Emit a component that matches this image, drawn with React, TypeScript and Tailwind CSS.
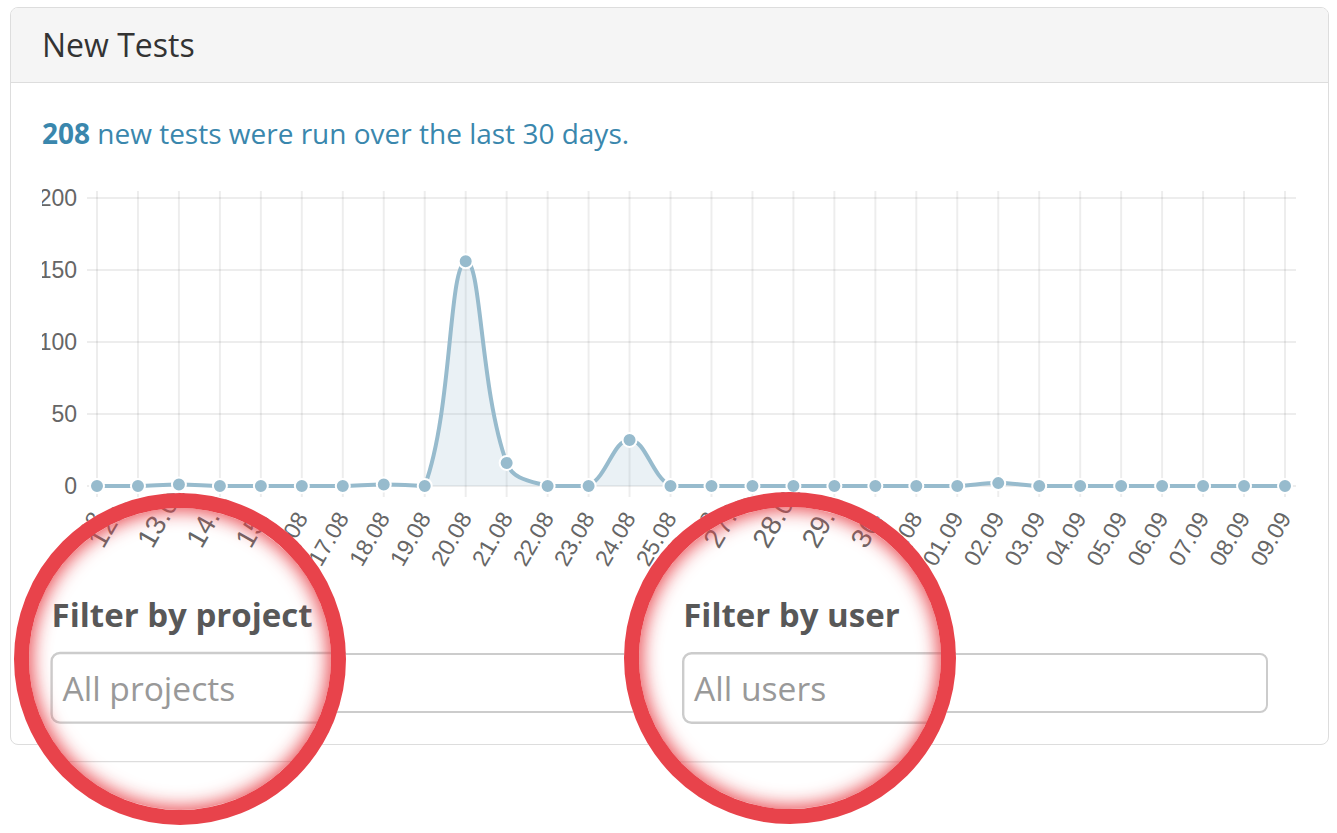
import React from "react";

const DATES = [
  "11.08","12.08","13.08","14.08","15.08","16.08","17.08","18.08","19.08","20.08",
  "21.08","22.08","23.08","24.08","25.08","26.08","27.08","28.08","29.08","30.08",
  "31.08","01.09","02.09","03.09","04.09","05.09","06.09","07.09","08.09","09.09",
];
const VALUES = [0,0,1,0,0,0,0,1,0,156,16,0,0,32,0,0,0,0,0,0,0,0,2,0,0,0,0,0,0,0];

const X0 = 97;
const STEP = 1188 / 29;
const TOP = 198;
const BOTTOM = 486;
const yOf = (v: number) => BOTTOM - v * 1.44;

type P = { x: number; y: number };

function buildPath(pts: P[]) {
  const cps = pts.map((p, i) => {
    const prev = i > 0 ? pts[i - 1] : p;
    const next = i < pts.length - 1 ? pts[i + 1] : p;
    const t = i > 0 && i < pts.length - 1 ? 0.4 : 0;
    const d01 = Math.hypot(p.x - prev.x, p.y - prev.y);
    const d12 = Math.hypot(next.x - p.x, next.y - p.y);
    const sum = d01 + d12;
    const fa = sum === 0 ? 0 : (t * d01) / sum;
    const fb = sum === 0 ? 0 : (t * d12) / sum;
    const inner = { x: p.x - fa * (next.x - prev.x), y: p.y - fa * (next.y - prev.y) };
    const outer = { x: p.x + fb * (next.x - prev.x), y: p.y + fb * (next.y - prev.y) };
    inner.y = Math.min(BOTTOM, Math.max(TOP, inner.y));
    outer.y = Math.min(BOTTOM, Math.max(TOP, outer.y));
    return { inner, outer };
  });
  let d = `M${pts[0].x},${pts[0].y}`;
  for (let i = 1; i < pts.length; i++) {
    const a = cps[i - 1].outer;
    const b = cps[i].inner;
    d += ` C${a.x},${a.y} ${b.x},${b.y} ${pts[i].x},${pts[i].y}`;
  }
  return d;
}

function Chart() {
  const pts: P[] = VALUES.map((v, i) => ({ x: X0 + i * STEP, y: yOf(v) }));
  const line = buildPath(pts);
  const fill = `${line} L${pts[pts.length - 1].x},${BOTTOM} L${pts[0].x},${BOTTOM} Z`;
  const grid = "rgba(0,0,0,0.07)";
  return (
    <svg width={1254} height={450} className="block" viewBox="0 0 1254 450">
      <g transform="translate(-42,-153)" fontFamily="'Liberation Sans', Arial, sans-serif">
        {[0, 50, 100, 150, 200].map((v) => (
          <g key={v}>
            <line x1={87} x2={1297} y1={yOf(v)} y2={yOf(v)} stroke={grid} strokeWidth={2} />
            <text x={77} y={yOf(v)} textAnchor="end" dominantBaseline="central" fontSize={23} fill="#666">
              {v}
            </text>
          </g>
        ))}
        {pts.map((p, i) => (
          <line key={i} x1={p.x} x2={p.x} y1={191} y2={497} stroke={grid} strokeWidth={2} />
        ))}
        <path d={fill} fill="rgba(151,187,205,0.2)" />
        <path d={line} fill="none" stroke="#97bbcd" strokeWidth={4} />
        {pts.map((p, i) => (
          <circle key={i} cx={p.x} cy={p.y} r={7} fill="#97bbcd" stroke="#fff" strokeWidth={2} />
        ))}
        {pts.map((p, i) => (
          <text
            key={i}
            x={p.x}
            y={514}
            textAnchor="end"
            dominantBaseline="central"
            fontSize={23}
            fill="#666"
            transform={`rotate(-60 ${p.x} 514)`}
          >
            {DATES[i]}
          </text>
        ))}
      </g>
    </svg>
  );
}

function Page() {
  return (
    <div className="w-[1337px] h-[833px] bg-white pt-[7px] pl-[10px] font-['Open_Sans',sans-serif]">
      <div className="w-[1319px] border border-[#ddd] rounded-[8px] bg-white overflow-hidden">
        <div className="h-[75px] bg-[#f5f5f5] border-b border-[#ddd] flex items-center pl-[31px]">
          <h3 className="text-[32px] leading-[40px] text-[#333] font-normal">New Tests</h3>
        </div>
        <div className="px-[31px] pt-[30px] pb-[31px]">
          <p className="text-[28px] leading-[40px] text-[#3a87ad]">
            <strong className="font-bold">208</strong> new tests were run over the last 30 days.
          </p>
          <Chart />
          <div className="grid grid-cols-2 gap-x-[60px] pl-[30px] pr-[29px]">
            <div>
              <label className="block text-[27.5px] leading-[38px] font-bold text-[#585858] pl-[1px] mb-[12px]">
                Filter by project
              </label>
              <div className="h-[60px] border-2 border-[#ccc] rounded-[8px] flex items-center pl-[8px] text-[28px] text-[#999]">
                All projects
              </div>
            </div>
            <div>
              <label className="block text-[27.5px] leading-[38px] font-bold text-[#585858] pl-[1px] mb-[12px]">
                Filter by user
              </label>
              <div className="h-[60px] border-2 border-[#ccc] rounded-[8px] flex items-center pl-[8px] text-[28px] text-[#999]">
                All users
              </div>
            </div>
          </div>
        </div>
      </div>
    </div>
  );
}

export default function App() {
  return (
    <div className="relative w-[1337px] h-[833px] overflow-hidden bg-white">
      <Page />
      {/* magnifier 1 */}
      <div className="absolute left-[14px] top-[493px] w-[332px] h-[332px] rounded-full overflow-hidden">
        <div className="absolute left-[-14px] top-[-493px] w-[1337px] h-[833px] scale-[1.2] origin-[180px_659px]">
          <Page />
        </div>
      </div>
      <div className="absolute left-[14px] top-[493px] w-[332px] h-[332px] rounded-full border-[15px] border-[#e8434b] shadow-[inset_0_0_18px_3px_rgba(232,67,75,0.95)]" />
      {/* magnifier 2 */}
      <div className="absolute left-[624px] top-[492px] w-[332px] h-[332px] rounded-full overflow-hidden">
        <div className="absolute left-[-624px] top-[-492px] w-[1337px] h-[833px] scale-[1.2] origin-[790px_658px]">
          <Page />
        </div>
      </div>
      <div className="absolute left-[624px] top-[492px] w-[332px] h-[332px] rounded-full border-[15px] border-[#e8434b] shadow-[inset_0_0_18px_3px_rgba(232,67,75,0.95)]" />
    </div>
  );
}
